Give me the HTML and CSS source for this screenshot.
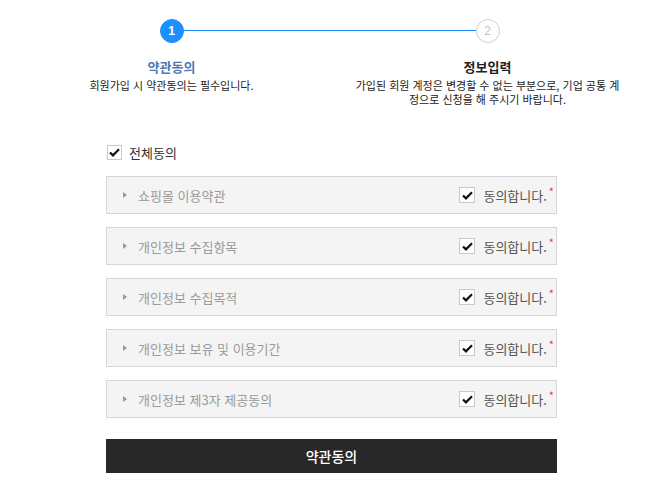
FILE: index.html
```html
<!DOCTYPE html>
<html lang="ko">
<head>
<meta charset="utf-8">
<link rel="stylesheet" href="styles.css">
</head>
<body>
<div class="steps">
  <div class="step active">
    <div class="circle">1</div>
    <div class="step-title">약관동의</div>
    <div class="step-desc">회원가입 시 약관동의는 필수입니다.</div>
  </div>
  <div class="step">
    <div class="circle">2</div>
    <div class="step-title">정보입력</div>
    <div class="step-desc">가입된 회원 계정은 변경할 수 없는 부분으로, 기업 공통 계정으로 신청을 해 주시기 바랍니다.</div>
  </div>
</div>

<div class="terms">
  <label class="all">
    <span class="cb"><svg viewBox="0 0 12 10" width="11" height="9"><path d="M1 5 L4.3 8.2 L11 1.5" fill="none" stroke="#111" stroke-width="2.4"/></svg></span>
    <span>전체동의</span>
  </label>

  <div class="row">
    <span class="arrow"></span><span class="name">쇼핑몰 이용약관</span>
    <span class="agree"><span class="cb"><svg viewBox="0 0 12 10" width="11" height="9"><path d="M1 5 L4.3 8.2 L11 1.5" fill="none" stroke="#111" stroke-width="2.4"/></svg></span>동의합니다.<span class="req">*</span></span>
  </div>
  <div class="row">
    <span class="arrow"></span><span class="name">개인정보 수집항목</span>
    <span class="agree"><span class="cb"><svg viewBox="0 0 12 10" width="11" height="9"><path d="M1 5 L4.3 8.2 L11 1.5" fill="none" stroke="#111" stroke-width="2.4"/></svg></span>동의합니다.<span class="req">*</span></span>
  </div>
  <div class="row">
    <span class="arrow"></span><span class="name">개인정보 수집목적</span>
    <span class="agree"><span class="cb"><svg viewBox="0 0 12 10" width="11" height="9"><path d="M1 5 L4.3 8.2 L11 1.5" fill="none" stroke="#111" stroke-width="2.4"/></svg></span>동의합니다.<span class="req">*</span></span>
  </div>
  <div class="row">
    <span class="arrow"></span><span class="name">개인정보 보유 및 이용기간</span>
    <span class="agree"><span class="cb"><svg viewBox="0 0 12 10" width="11" height="9"><path d="M1 5 L4.3 8.2 L11 1.5" fill="none" stroke="#111" stroke-width="2.4"/></svg></span>동의합니다.<span class="req">*</span></span>
  </div>
  <div class="row">
    <span class="arrow"></span><span class="name">개인정보 제3자 제공동의</span>
    <span class="agree"><span class="cb"><svg viewBox="0 0 12 10" width="11" height="9"><path d="M1 5 L4.3 8.2 L11 1.5" fill="none" stroke="#111" stroke-width="2.4"/></svg></span>동의합니다.<span class="req">*</span></span>
  </div>

  <button class="submit">약관동의</button>
</div>
</body>
</html>
```

FILE: styles.css
```css
html, body {
  margin: 0;
  padding: 0;
  background: #fff;
  font-family: "Noto Sans CJK KR", "Noto Sans", sans-serif;
  color: #333;
}

.steps {
  position: relative;
  width: 632px;
  margin: 0 auto;
  padding-top: 19px;
  display: grid;
  grid-template-columns: 1fr 1fr;
}

.steps::before {
  content: "";
  position: absolute;
  top: 30px;
  left: 25%;
  right: 25%;
  height: 1px;
  background: #1e8fff;
}

.step {
  display: flex;
  flex-direction: column;
  align-items: center;
  text-align: center;
}

.circle {
  position: relative;
  z-index: 1;
  width: 22px;
  height: 22px;
  border-radius: 50%;
  border: 1px solid #cfcfcf;
  background: #fff;
  color: #c4c4c4;
  font-size: 12px;
  line-height: 22px;
  font-family: "Liberation Sans", sans-serif;
}

.step.active .circle {
  background: #1e8fff;
  border-color: #1e8fff;
  color: #fff;
  font-weight: bold;
}

.step-title {
  margin-top: 15px;
  font-size: 13px;
  font-weight: bold;
  line-height: 18px;
  color: #222;
}

.step.active .step-title {
  color: #4f79b3;
}

.step-desc {
  margin-top: 2px;
  padding: 0 23px;
  font-size: 11px;
  line-height: 14px;
  color: #222;
}

.terms {
  width: 451px;
  margin: 38px 0 0 106px;
}

.cb {
  display: inline-flex;
  align-items: center;
  justify-content: center;
  box-sizing: border-box;
  width: 15px;
  height: 15px;
  border: 1px solid #c9c9c9;
  background: #fff;
}

.all {
  display: flex;
  align-items: center;
  gap: 7px;
  height: 16px;
  font-size: 13px;
  color: #333;
  margin-bottom: 16px;
  padding-left: 1px;
}

.row {
  display: flex;
  align-items: center;
  box-sizing: border-box;
  height: 38px;
  border: 1px solid #d6d6d6;
  background: #f4f4f4;
  padding-left: 16px;
  margin-bottom: 13px;
  font-size: 13px;
}

.arrow {
  width: 0;
  height: 0;
  border-left: 4px solid #999;
  border-top: 3.5px solid transparent;
  border-bottom: 3.5px solid transparent;
  margin-right: 11px;
}

.name {
  color: #9a9a9a;
  flex: 1;
}

.agree {
  display: flex;
  align-items: center;
  color: #555;
  padding-right: 2px;
}

.agree .cb {
  width: 16px;
  height: 16px;
  margin-right: 8px;
}

.req {
  color: #e8336b;
  font-size: 11px;
  align-self: flex-start;
  margin-left: 2px;
  margin-top: -3px;
}

.submit {
  display: block;
  width: 100%;
  height: 34px;
  margin-top: 21px;
  border: 0;
  background: #282828;
  color: #fff;
  font-family: inherit;
  font-size: 14px;
  font-weight: 500;
}
```
